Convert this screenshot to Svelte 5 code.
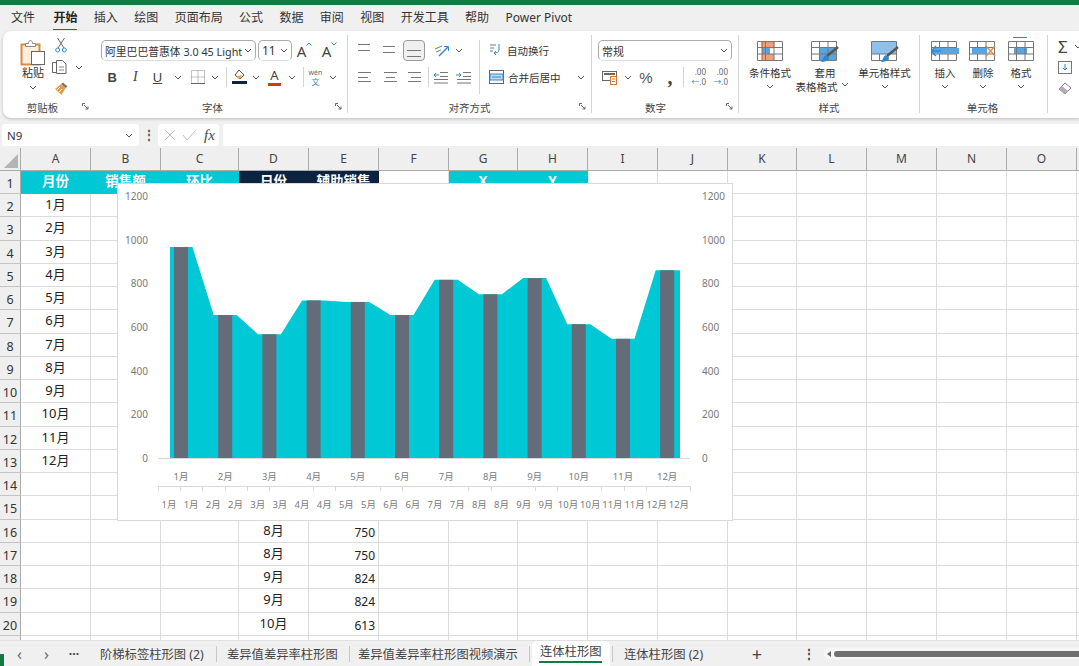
<script>
  const tabs = ['文件','开始','插入','绘图','页面布局','公式','数据','审阅','视图','开发工具','帮助','Power Pivot'];
  const cols = ['A','B','C','D','E','F','G','H','I','J','K','L','M','N','O',''];
  const months = Array.from({length:12},(_,i)=>`${i+1}月`);
  const vals = [966,655,567,722,715,655,816,750,824,613,546,860];
  const content = {
    '1A':'月份','1B':'销售额','1C':'环比','1D':'日份','1E':'辅助销售','1G':'X','1H':'Y',
    '16D':'8月','16E':'750','17D':'8月','17E':'750','18D':'9月','18E':'824','19D':'9月','19E':'824','20D':'10月','20E':'613'
  };
  months.forEach((m,i)=>{ content[`${i+2}A`]=m; });
  const rows = Array.from({length:21},(_,i)=>i+1);
  function cellClass(r,c){
    let s='cell';
    if(r===1 && 'ABCGH'.includes(c) && c) s+=' cy';
    if(r===1 && 'DE'.includes(c) && c) s+=' nv';
    if(r>1 && c==='E') s+=' num';
    return s;
  }
  const base=458, k=0.2183, cx=i=>181+44.2*i;
  const y=v=>base-v*k;
  let area=`M170 ${base}`;
  vals.forEach((v,i)=>{
    const l=i===0?170:cx(i)-11.5, r=i===11?680:cx(i)+11.5;
    area+=`L${l} ${y(v)}L${r} ${y(v)}`;
  });
  area+=`L680 ${base}Z`;
  const ticks=[0,1,2,3,4,5,7,8,10,11,14,15,17,18,20,21,22,24].map(i=>158+22.17*i);
  const ylabels=[0,200,400,600,800,1000,1200];
  const second=months.flatMap(m=>[m,m]);
</script>

{#snippet chev()}
  <svg class="chev" width="8" height="5" viewBox="0 0 8 5"><path d="M1 1l3 3 3-3" fill="none" stroke="#555" stroke-width="1"/></svg>
{/snippet}
{#snippet lines(list)}
  <svg width="20" height="16" viewBox="0 0 20 16">
    {#each list as l}<path d="M{l[0]} {l[2]}.5H{l[1]}" stroke="#777" stroke-width="1"/>{/each}
  </svg>
{/snippet}
{#snippet launcher()}
  <svg class="launch" width="7" height="7" viewBox="0 0 7 7"><path d="M.5 3V.5H3M2 2l4 4M6 3.5V6H3.5" fill="none" stroke="#666"/></svg>
{/snippet}
{#snippet tableBase()}
  <path d="M.5 .5h25v19H.5zM.5 6.5h25M.5 13h25M8.500 .5v19M17 .5v19" fill="none" stroke="#777"/>
{/snippet}

<div class="page">
  <div class="topbar"></div>
  <nav class="menu">
    {#each tabs as t,i}<span class="mi" class:on={i===1}>{t}</span>{/each}
  </nav>

  <section class="ribbon">
    <div class="group clip">
      <div class="body clipbody">
        <div class="paste">
          <svg width="26" height="27" viewBox="0 0 26 27">
            <rect x="1.500" y="5.500" width="18" height="20" fill="#fbeee0" stroke="#d98a44" stroke-width="2"/>
            <path d="M5.500 7.500V4.500h3c0-4 4-4 4 0h3v3z" fill="#fff" stroke="#888"/>
            <rect x="11.500" y="12.500" width="13" height="13" fill="#fff" stroke="#666"/>
          </svg>
          <span>粘贴</span>
          {@render chev()}
        </div>
        <div class="clipcol">
          <svg width="12" height="16" viewBox="0 0 12 16"><path d="M2.500 1l6.500 10M9.500 1L3 11" stroke="#666" fill="none"/><circle cx="2.700" cy="13" r="2" fill="none" stroke="#2e87d0"/><circle cx="9.300" cy="13" r="2" fill="none" stroke="#2e87d0"/></svg>
          <div class="copyrow">
            <svg width="15" height="14" viewBox="0 0 15 14"><path d="M4.500 2.500h-4v10h4z" fill="none" stroke="#666" stroke-width="1"/><path d="M4.500 .5h6l3.500 3.500v9.500h-9.500z" fill="#fff" stroke="#666"/><path d="M7 7h5M7 10h5" stroke="#888"/></svg>
            {@render chev()}
          </div>
          <svg width="15" height="15" viewBox="0 0 15 15"><path d="M9 1.500l4.500 4-2 1.500L7 3z" fill="#777"/><path d="M7 3l4.500 4-4 7L1 8z" fill="#e89a50"/><path d="M3 9l3-3M5 11l3-3" stroke="#fff"/></svg>
        </div>
      </div>
      <div class="glabel">剪贴板{@render launcher()}</div>
    </div>

    <div class="group font">
      <div class="body">
        <div class="row1 fontrow1">
          <div class="select fname"><span>阿里巴巴普惠体 3.0 45 Light</span>{@render chev()}</div>
          <div class="select fsize"><span>11</span>{@render chev()}</div>
          <div class="grow">A<svg width="6" height="4" viewBox="0 0 6 4"><path d="M.5 3.500L3 1l2.500 2.500" fill="none" stroke="#2e87d0"/></svg></div>
          <div class="grow">A<svg width="6" height="4" viewBox="0 0 6 4"><path d="M.5 .5L3 3l2.500-2.500" fill="none" stroke="#2e87d0"/></svg></div>
        </div>
        <div class="row2 fontrow2">
          <b class="fm">B</b><i class="fm serif">I</i><u class="fm">U</u>{@render chev()}
          <svg width="14" height="14" viewBox="0 0 14 14"><path d="M.5 .5h13v13H.5zM.5 7h13M7 .5v13" fill="none" stroke="#888" stroke-dasharray="1 1"/><path d="M0 13.500h14" stroke="#666"/></svg>
          {@render chev()}<span class="vsep"></span>
          <svg width="15" height="16" viewBox="0 0 15 16"><path d="M7 1l5 5-4 4-5-4z" fill="#fff" stroke="#555"/><path d="M5 9c0-2 3-3 5-3l-2 4z" fill="#e8a04c"/><rect y="12" width="15" height="3" fill="#0c2340"/></svg>
          {@render chev()}
          <span class="colorA">A</span>
          {@render chev()}<span class="vsep"></span>
          <span class="wen"><small>wén</small><em>文</em></span>
          {@render chev()}
        </div>
      </div>
      <div class="glabel">字体{@render launcher()}</div>
    </div>

    <div class="group align">
      <div class="body alignbody">
        <div class="alignleft">
          <div class="row1 al1">
            {@render lines([[3,15,1],[3,15,7]])}
            {@render lines([[3,15,3],[3,15,9]])}
            <span class="selbox">{@render lines([[3,17,7],[3,17,13]])}</span>
            <span></span>
            <svg width="17" height="14" viewBox="0 0 17 14"><path d="M2 5l7-3M3 8l5-2" stroke="#777" fill="none"/><path d="M6 12L15 3" stroke="#2e87d0" stroke-width="1.500"/><path d="M11 2.500h4.500V7" fill="none" stroke="#2e87d0"/></svg>
            {@render chev()}
          </div>
          <div class="row2 al2">
            {@render lines([[3,16,3],[3,13,8],[3,16,12]])}
            {@render lines([[4,17,3],[6,15,8],[4,17,12]])}
            {@render lines([[4,17,3],[7,17,8],[4,17,12]])}
            <span class="vsep"></span>
            <svg width="15" height="14" viewBox="0 0 15 14"><path d="M7 2.500h8M7 6.500h8M1 9.500h14M1 13h14" stroke="#777"/><path d="M6 5H1M3 3L1 5l2 2" stroke="#2e87d0" fill="none"/></svg>
            <svg width="15" height="14" viewBox="0 0 15 14"><path d="M7 2.500h8M7 6.500h8M1 9.500h14M1 13h14" stroke="#777"/><path d="M0 5h5M3 3l2 2-2 2" stroke="#2e87d0" fill="none"/></svg>
          </div>
        </div>
        <div class="alignright">
          <div class="wrapline">
            <svg width="14" height="15" viewBox="0 0 14 15"><path d="M1 2h6M1 5h4M1 8h3" stroke="#777"/><path d="M10 1v6c0 2-2 3-5 3M7 8l-2 2 2 2" fill="none" stroke="#2e87d0"/></svg>
            <span>自动换行</span>
          </div>
          <div class="wrapline merge">
            <svg width="15" height="14" viewBox="0 0 15 14"><rect x=".5" y=".5" width="14" height="13" fill="#fff" stroke="#666"/><rect x="1" y="4" width="13" height="6" fill="#bcdcf2" stroke="#2e87d0"/><path d="M3 7h9" stroke="#2e87d0"/></svg>
            <span>合并后居中</span>
            {@render chev()}
          </div>
        </div>
      </div>
      <div class="glabel">对齐方式{@render launcher()}</div>
    </div>

    <div class="group number">
      <div class="body">
        <div class="row1"><div class="select nfmt"><span>常规</span>{@render chev()}</div></div>
        <div class="row2 numrow2">
          <svg width="16" height="15" viewBox="0 0 16 15"><rect x=".5" y="1.500" width="14" height="9" fill="#fff" stroke="#666"/><path d="M2 4h11" stroke="#666" stroke-width="2"/><rect x="8.500" y="6.500" width="6" height="8" fill="#fff" stroke="#d9782d"/><path d="M10 9h3M10 11.500h3" stroke="#d9782d"/></svg>
          {@render chev()}
          <span class="pct">%</span>
          <span class="comma">,</span>
          <span class="vsep"></span>
          <span class="dec"><small>.00</small><small><em>←</em>.0</small></span>
          <span class="dec"><small>.00</small><small><em>→</em>.0</small></span>
        </div>
      </div>
      <div class="glabel">数字{@render launcher()}</div>
    </div>

    <div class="group styles">
      <div class="body big">
        <div class="bigitem">
          <svg width="26" height="20" viewBox="0 0 26 20"><rect x="5" y="1" width="12" height="6" fill="#f0a078" stroke="#d9782d" stroke-width=".5"/><rect x="5" y="13" width="12" height="6" fill="#f0a078"/><rect x="5" y="7" width="8" height="6" fill="#5aa5e0"/><path d="M5 1v18" stroke="#c85a20"/>{@render tableBase()}</svg>
          <span>条件格式</span>{@render chev()}
        </div>
        <div class="bigitem">
          <svg width="28" height="22" viewBox="0 0 28 22"><rect x="9" y="7" width="16" height="12" fill="#5aa5e0"/>{@render tableBase()}<path d="M27 6L16 15" stroke="#555" stroke-width="2.500"/><path d="M15 14l3 3c-1 3-5 4-8 4 2-2 2-6 5-7z" fill="#2e87d0"/></svg>
          <span class="lift">套用</span><span class="inlinechev">表格格式 {@render chev()}</span>
        </div>
        <div class="bigitem">
          <svg width="28" height="22" viewBox="0 0 28 22"><rect x="1" y="1" width="24" height="12" fill="#8ec0ec"/><path d="M.5 .5h25v19H.5zM.5 13h25M8.500 13v6.500M17 13v6.500" fill="none" stroke="#777"/><path d="M27 6L16 15" stroke="#555" stroke-width="2.500"/><path d="M15 14l3 3c-1 3-5 4-8 4 2-2 2-6 5-7z" fill="#2e87d0"/></svg>
          <span class="lift">单元格样式</span>{@render chev()}
        </div>
      </div>
      <div class="glabel">样式</div>
    </div>

    <div class="group cells">
      <div class="body big">
        <div class="bigitem">
          <svg width="28" height="20" viewBox="0 0 28 20">{@render tableBase()}<rect x="2" y="7" width="26" height="6" fill="#5aa5e0"/><path d="M0 10h10M5 5l-5 5 5 5" fill="none" stroke="#2e87d0" stroke-width="1.300"/></svg>
          <span>插入</span>{@render chev()}
        </div>
        <div class="bigitem">
          <svg width="28" height="20" viewBox="0 0 28 20">{@render tableBase()}<rect x="3" y="7" width="15" height="6" fill="#5aa5e0"/><path d="M17 5l9 10M26 5l-9 10" stroke="#e68a3c" stroke-width="1.400"/></svg>
          <span>删除</span>{@render chev()}
        </div>
        <div class="bigitem">
          <svg width="26" height="24" viewBox="0 0 26 24" class="fmticon"><path d="M5 .5h14" stroke="#2e87d0"/><g transform="translate(0 4)"><rect x="6" y="6" width="13" height="7" fill="#5aa5e0"/>{@render tableBase()}</g></svg>
          <span>格式</span>{@render chev()}
        </div>
      </div>
      <div class="glabel">单元格</div>
    </div>

    <div class="group edit">
      <div class="editcol">
        <div class="editrow sigma">Σ{@render chev()}</div>
        <div class="editrow"><svg width="14" height="13" viewBox="0 0 14 13"><rect x=".5" y=".5" width="13" height="12" fill="#fff" stroke="#777"/><path d="M7 3v6M5 7l2 2 2-2" fill="none" stroke="#2e87d0"/></svg>{@render chev()}</div>
        <div class="editrow"><svg width="14" height="14" viewBox="0 0 14 14"><path d="M1 8l6-6 6 5-6 6z" fill="#fff" stroke="#8a7a8a"/><path d="M1 8l3-3 6 5-3 3z" fill="#b9a9b9"/></svg>{@render chev()}</div>
      </div>
    </div>
  </section>

  <div class="formula">
    <div class="namebox"><span>N9</span>{@render chev()}</div>
    <span class="dots">⋮</span>
    <div class="fxbox">
      <svg width="14" height="14" viewBox="0 0 14 14"><path d="M2 2l10 10M12 2L2 12" stroke="#bdbdbd"/></svg>
      <svg width="15" height="14" viewBox="0 0 15 14"><path d="M1 7l4 5L14 2" fill="none" stroke="#bdbdbd"/></svg>
      <span class="fx">fx</span>
    </div>
    <div class="input"></div>
  </div>

  <div class="sheet">
    <div class="grid">
      <div class="corner"><svg width="14" height="14" viewBox="0 0 14 14"><path d="M14 0v14H0z" fill="#b5b5b5"/></svg></div>
      {#each cols as c}<div class="colh">{c}</div>{/each}
      {#each rows as r}
        <div class="rowh">{r < 21 ? r : ''}</div>
        {#each cols as c}
          <div class={cellClass(r,c)}>{content[`${r}${c}`] ?? ''}</div>
        {/each}
      {/each}
    </div>

    <div class="chart">
      <svg width="614" height="336" viewBox="118 184 614 336">
        <path d={area} fill="#00c8d4"/>
        {#each vals as v,i}
          <rect x={cx(i)-7} y={y(v)} width="14" height={base-y(v)} fill="#646c7a"/>
        {/each}
        <path d="M158 458.500H690M158 486.500H690" stroke="#d9d9d9"/>
        {#each ticks as t}<path d="M{Math.round(t)}.5 486v5" stroke="#d9d9d9"/>{/each}
        {#each ylabels as l}
          <text x="148" y={y(l)+4} text-anchor="end" class="tl">{l}</text>
          <text x="702" y={y(l)+4} class="tl">{l}</text>
        {/each}
        {#each months as m,i}
          <text x={cx(i)} y="480" text-anchor="middle" class="tm">{m}</text>
        {/each}
        {#each second as m,i}
          <text x={169+22.17*i} y="508" text-anchor="middle" class="tm">{m}</text>
        {/each}
      </svg>
    </div>
  </div>

  <footer class="tabsbar">
    <span class="greenmark"></span>
    <span class="nav navl">‹</span>
    <span class="nav navr">›</span>
    <span class="more">···</span>
    <span class="st st1">阶梯标签柱形图 (2)</span><span class="tsep"></span>
    <span class="st st2">差异值差异率柱形图</span><span class="tsep"></span>
    <span class="st st3">差异值差异率柱形图视频演示</span><span class="tsep"></span>
    <span class="st active">连体柱形图</span><span class="tsep"></span>
    <span class="st st5">连体柱形图 (2)</span>
    <span class="plus">+</span>
    <span class="vdots">⋮</span>
    <div class="scroll"><span class="arrow"></span><span class="thumb"></span></div>
  </footer>
</div>

<style>
  :global(body){margin:0;background:#f0f0f0}
  svg{flex:none}
  .page{width:1079px;height:666px;overflow:hidden;display:flex;flex-direction:column;background:#f0f0f0;color:#333;
    font-family:"Noto Sans","Noto Sans CJK SC",sans-serif;font-size:10.500px}
  .topbar{height:5px;background:#107c41;flex:none}
  .menu{height:26px;flex:none;display:flex;align-items:center;gap:16.400px;padding-left:11px;font-size:12px;color:#333}
  .mi{position:relative;line-height:20px;white-space:nowrap}
  .mi:first-child{margin-right:2px}
  .mi.on{font-weight:700;color:#222}
  .mi.on::after{content:"";position:absolute;left:0;right:0;bottom:-2px;height:1.500px;background:#107c41}

  .ribbon{height:87px;flex:none;margin-left:3px;background:#fff;border-radius:8px 0 0 8px;box-shadow:0 1px 3px rgba(0,0,0,.22);display:flex;padding-top:4px;box-sizing:border-box;overflow:hidden}
  .group{height:78px;display:flex;flex-direction:column;position:relative;box-sizing:border-box;flex:none;border-right:1px solid #d4d4d4}
  .body{height:64px;box-sizing:border-box;padding-top:5px}
  .glabel{height:14px;line-height:18px;text-align:center;font-size:10.500px;color:#444;white-space:nowrap}
  .launch{position:absolute;right:5px;bottom:3px}
  .clip{width:92px;border-right-color:transparent}
  .clip .glabel{padding-right:12px}
  .clipbody{display:grid;grid-template-columns:49px 18px 22px;padding-top:2px}
  .paste{display:flex;flex-direction:column;align-items:center;padding-left:11px;box-sizing:border-box;padding-top:2px;line-height:14px;font-size:11px}
  .paste .chev{margin-top:5px}
  .clipcol{display:flex;flex-direction:column;align-items:center;gap:7px;grid-column:2 / 4;width:18px}
  .copyrow{display:flex;align-items:center;gap:8px;width:18px;white-space:nowrap}

  .font{width:253px;padding-left:6px}
  .font .glabel{padding-right:17px;margin-left:-6px}
  .row1{height:21px;display:flex;align-items:center}
  .row2{height:22px;margin-top:5px;display:grid;align-items:center;justify-items:center}
  .select{height:21px;box-sizing:border-box;border:1px solid #aaa;border-bottom-color:#ddd;border-radius:5px;display:flex;align-items:center;justify-content:space-between;padding:0 3px;white-space:nowrap;font-size:11px;background:#fff}
  .fname{width:155px;font-size:10.800px}
  .fsize{width:34px;margin-left:2px;font-size:12px}
  .grow{width:25px;display:flex;justify-content:center;align-items:flex-start;font-size:15px;line-height:18px;color:#444}
  .fontrow2{grid-template-columns:22.500px 23.500px 21px 20px 20px 14px 8px 18px 16px 21px 14px 8px 17px 18px}
  .fm{font-size:13px;color:#444;font-family:"Liberation Sans",sans-serif}
  .serif{font-family:"Liberation Serif",serif;font-size:14px}
  .vsep{display:block;width:1px;height:20px;background:#d4d4d4;justify-self:center}
  .colorA{font-size:13px;line-height:15px;color:#444;border-bottom:3px solid #c8400f;padding:0 2px}
  .wen{display:flex;flex-direction:column;align-items:center}
  .wen small{display:block;font-size:7px;line-height:9px;color:#666}
  .wen em{display:block;font-style:normal;font-size:8px;color:#2e87d0;line-height:9px}

  .align{width:244px}
  .alignbody{display:flex}
  .alignleft{width:132px;padding-left:5px;box-sizing:border-box;border-right:1px solid #d4d4d4;height:54px}
  .al1{display:grid;grid-template-columns:24px 25px 24px 4px 23px 12px;align-items:center;justify-items:center}
  .al2{grid-template-columns:24px 25px 24px 4px 21px 24px}
  .selbox{width:22px;height:21px;border:1px solid #999;border-radius:4px;background:#f0f0f0;display:flex;align-items:center;justify-content:center;box-sizing:border-box}
  .alignright{padding-left:9px}
  .wrapline{height:21px;display:flex;align-items:center;gap:4px;white-space:nowrap}
  .merge{height:22px;margin-top:5px}
  .merge .chev{margin-left:12px}

  .number{width:147px;padding-left:6px}
  .number .glabel{padding-right:19px;margin-left:-6px}
  .nfmt{width:134px}
  .numrow2{grid-template-columns:24px 11px 26px 22px 4px 22px 22px}
  .pct{font-size:15px;color:#555;font-family:"Liberation Sans",sans-serif}
  .comma{font-size:20px;font-weight:700;color:#444;line-height:16px;font-family:"Liberation Serif",serif}
  .dec{display:flex;flex-direction:column;align-items:flex-end;color:#666;width:20px}
  .dec small{display:block;font-size:8px;line-height:10px;white-space:nowrap}
  .dec em{font-style:normal;color:#2e87d0}

  .styles{width:181px}
  .styles .big{padding-left:6px;display:grid;grid-template-columns:50px 60px 59px}
  .cells{width:128px}
  .cells .glabel{padding-right:2px}
  .cells .big{padding-left:6px;display:grid;grid-template-columns:38px 38px 38px}
  .big{padding-top:6px}
  .bigitem{display:flex;flex-direction:column;align-items:center;line-height:14px;white-space:nowrap}
  .bigitem svg:first-child{margin-bottom:5px}
  .bigitem svg.fmticon{margin-top:-4px;margin-bottom:5px}
  .bigitem .chev{margin-top:4px}
  .lift{margin-top:-2px}
  .inlinechev{display:flex;align-items:center;gap:3px;margin-left:-6px}
  .inlinechev .chev{margin-top:0}
  .edit{border:none;width:32px}
  .editcol{display:flex;flex-direction:column;padding:2px 0 0 10px;gap:3px}
  .editrow{display:flex;align-items:center;height:18px;gap:6px}
  .sigma{font-size:17px;color:#444}

  .formula{height:22px;margin-top:6px;flex:none;display:flex;align-items:stretch}
  .namebox{margin-left:2px;width:137px;background:#fff;border-radius:3px;display:flex;align-items:center;justify-content:space-between;padding:0 6px 0 5px;box-sizing:border-box;font-size:11.500px}
  .dots{width:19px;text-align:center;line-height:22px;color:#555;font-weight:700;font-size:12px}
  .fxbox{width:61px;background:#fff;border-radius:3px;display:flex;align-items:center;gap:5px;padding-left:5px;box-sizing:border-box}
  .fx{font-family:"Liberation Serif",serif;font-style:italic;font-size:15px;color:#444;margin-left:2px}
  .input{margin-left:4px;flex:1;background:#fff;border-radius:3px 0 0 3px}

  .sheet{position:relative;flex:none;margin-top:2px;height:493px;overflow:hidden;background:#fff}
  .grid{display:grid;grid-template-columns:21px 70px 70px 78px 70px 70px 70px 69px 70px 70px 70px 69px 70px 70px 70px 70px 10px;
    grid-template-rows:23px 23px repeat(20,23.250px)}
  .corner{background:#efefef;border-right:1px solid #ababab;border-bottom:1px solid #ababab;box-sizing:border-box;display:flex;align-items:flex-end;justify-content:flex-end;padding:0 2px 2px 0}
  .colh{background:#efefef;border-right:1px solid #ababab;border-bottom:1px solid #ababab;box-sizing:border-box;text-align:center;line-height:22px;font-size:12px;color:#444}
  .rowh{background:#efefef;border-right:1px solid #ababab;border-bottom:1px solid #c4c4c4;box-sizing:border-box;text-align:center;font-size:12.500px;line-height:26px;color:#333;overflow:hidden}
  .cell{border-right:1px solid #dcdcdc;border-bottom:1px solid #dcdcdc;box-sizing:border-box;text-align:center;font-size:13px;line-height:21px;color:#222;white-space:nowrap;overflow:hidden}
  .num{text-align:right;padding-right:3px;font-size:12px;line-height:26px}
  .cy{background:#00c8d4;color:#fff;font-weight:700;font-size:13.500px;border-color:#00c8d4}
  .nv{background:#0c2340;color:#fff;font-weight:700;font-size:13.500px;border-color:#0c2340}
  .chart{position:absolute;left:117px;top:35px;width:616px;height:338px;box-sizing:border-box;background:#fff;border:1px solid #d9d9d9}
  .chart svg{display:block}
  .tl{font-size:10px;fill:#7a7a7a;font-family:"Noto Sans","Noto Sans CJK SC",sans-serif}
  .tm{font-size:9.500px;fill:#7a7a7a;font-family:"Noto Sans","Noto Sans CJK SC",sans-serif}

  .tabsbar{height:25px;flex:none;display:flex;align-items:center;background:#f0f0f0;font-size:12.300px;color:#444;white-space:nowrap;position:relative;box-shadow:0 -1px 0 #e0e0e0}
  .greenmark{position:absolute;left:0;bottom:0;width:4px;height:12px;background:#107c41}
  .nav{width:27px;text-align:center;font-size:16px;color:#666;flex:none;line-height:18px}
  .navl{margin-left:6px}
  .more{width:28px;text-align:center;font-weight:700;flex:none;line-height:12px}
  .st{flex:none}
  .st1{margin-left:12px;width:105px}
  .tsep{width:1px;height:16px;background:#c8c8c8;flex:none}
  .st1 + .tsep{margin-left:11px}
  .st2{margin-left:10px;width:111px}
  .st2 + .tsep{margin-left:11px}
  .st3{margin-left:8px;width:161px;overflow:hidden}
  .st3 + .tsep{margin-left:10px}
  .active{margin-left:2px;width:78px;box-sizing:border-box;padding-left:8px;height:25px;line-height:21px;background:#fff;border-radius:5px 5px 0 0;position:relative;margin-right:2px}
  .active::after{content:"";position:absolute;left:7px;width:63px;height:2px;bottom:3px;background:#107c41}
  .st5{margin-left:11px;width:79px}
  .plus{width:20px;margin-left:44px;font-size:18px;text-align:center;flex:none;line-height:18px}
  .vdots{width:12px;margin-left:36px;text-align:center;font-weight:700;flex:none;font-size:12px}
  .scroll{margin-left:9px;display:flex;align-items:center;flex:1;gap:3px;background:#f6f6f6;height:11px;border-radius:5px 0 0 5px;padding-left:3px}
  .arrow{width:0;height:0;border-top:3px solid transparent;border-bottom:3px solid transparent;border-right:4px solid #666;flex:none}
  .thumb{flex:1;height:6px;background:#707070;border-radius:3px 0 0 3px}
</style>
